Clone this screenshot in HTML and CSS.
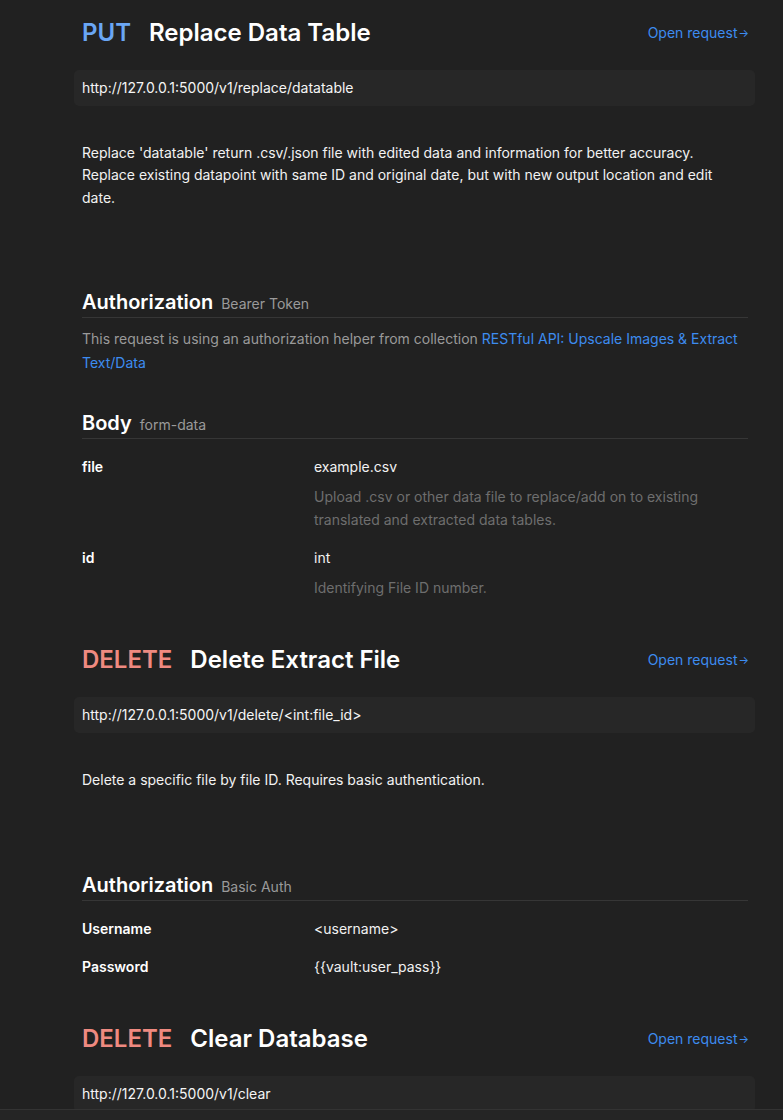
FILE: index.html
```html
<!DOCTYPE html>
<html>
<head>
<meta charset="utf-8">
<link rel="stylesheet" href="styles.css">
</head>
<body>
<main class="doc">
  <section class="req req-long">
    <div class="req-head">
      <h2 class="req-title"><span class="method put">PUT</span><span class="name">Replace Data Table</span></h2>
      <a class="open" href="#">Open request<span class="arrow">→</span></a>
    </div>
    <div class="url">http://127.0.0.1:5000/v1/replace/datatable</div>
    <p class="desc">Replace 'datatable' return .csv/.json file with edited data and information for better accuracy. Replace existing datapoint with same ID and original date, but with new output location and edit date.</p>

    <div class="sub first">
      <h3 class="sub-head">Authorization<span class="sub-type">Bearer Token</span></h3>
      <p class="helper">This request is using an authorization helper from collection <a href="#">RESTful API: Upscale Images &amp; Extract Text/Data</a></p>
    </div>

    <div class="sub">
      <h3 class="sub-head">Body<span class="sub-type">form-data</span></h3>
      <div class="kv body-kv">
        <div class="row">
          <div class="key">file</div>
          <div class="val">example.csv<div class="note">Upload .csv or other data file to replace/add on to existing translated and extracted data tables.</div></div>
        </div>
        <div class="row">
          <div class="key">id</div>
          <div class="val">int<div class="note">Identifying File ID number.</div></div>
        </div>
      </div>
    </div>
  </section>

  <section class="req">
    <div class="req-head">
      <h2 class="req-title"><span class="method del">DELETE</span><span class="name">Delete Extract File</span></h2>
      <a class="open" href="#">Open request<span class="arrow">→</span></a>
    </div>
    <div class="url">http://127.0.0.1:5000/v1/delete/&lt;int:file_id&gt;</div>
    <p class="desc">Delete a specific file by file ID. Requires basic authentication.</p>

    <div class="sub first">
      <h3 class="sub-head">Authorization<span class="sub-type">Basic Auth</span></h3>
      <div class="kv auth">
        <div class="row">
          <div class="key">Username</div>
          <div class="val">&lt;username&gt;</div>
        </div>
        <div class="row">
          <div class="key">Password</div>
          <div class="val">{{vault:user_pass}}</div>
        </div>
      </div>
    </div>
  </section>

  <section class="req">
    <div class="req-head">
      <h2 class="req-title"><span class="method del">DELETE</span><span class="name">Clear Database</span></h2>
      <a class="open" href="#">Open request<span class="arrow">→</span></a>
    </div>
    <div class="url">http://127.0.0.1:5000/v1/clear</div>
  </section>
</main>
<footer class="bottom-bar"></footer>
</body>
</html>
```
FILE: styles.css
```css
html, body {
  margin: 0;
  padding: 0;
  background: #212121;
}
body {
  font-family: Inter, "Noto Sans", "Liberation Sans", sans-serif;
  color: #f2f2f2;
  font-size: 14px;
  -webkit-font-smoothing: antialiased;
}
.doc {
  width: 666px;
  margin-left: 82px;
  padding-top: 17px;
  padding-bottom: 40px;
}
.req {
  margin-bottom: 44px;
}
.req.req-long {
  margin-bottom: 45px;
}
.req-head {
  display: flex;
  align-items: center;
  justify-content: space-between;
  height: 32px;
  margin-bottom: 21px;
}
.req-title {
  margin: 0;
  font-size: 24px;
  line-height: 32px;
  font-weight: 600;
  display: flex;
  gap: 18px;
}
.method { font-weight: 600; }
.method.put { color: #6aa6f4; }
.method.del { color: #ef8a80; }
.name { color: #ffffff; }
.open {
  color: #3d8cf0;
  text-decoration: none;
  font-size: 14px;
  line-height: 20px;
  display: flex;
  align-items: center;
  margin-right: -1px;
}
.arrow {
  font-size: 11px;
  margin-left: 1px;
}
.url {
  margin: 0 -7px 0 -8px;
  padding: 0 8px;
  height: 36px;
  line-height: 36px;
  background: #272727;
  border-radius: 5px;
  font-size: 14px;
  color: #f5f5f5;
}
.desc {
  margin: 36px 0 0;
  font-size: 14px;
  line-height: 22.4px;
  color: #f2f2f2;
}
.sub {
  margin-top: 35px;
}
.sub.first {
  margin-top: 80px;
}
.sub-head {
  margin: 0;
  font-size: 20px;
  line-height: 26px;
  font-weight: 600;
  color: #ffffff;
  border-bottom: 1px solid #363636;
  padding-bottom: 0;
  display: flex;
  align-items: baseline;
  gap: 8px;
}
.sub-type {
  font-size: 14px;
  font-weight: 400;
  color: #9a9a9a;
}
.helper {
  margin: 9px 0 0;
  line-height: 24px;
  color: #9a9a9a;
}
.helper a {
  color: #3d8cf0;
  text-decoration: none;
}
.kv {
  margin-top: 16px;
  display: flex;
  flex-direction: column;
  gap: 14px;
}
.kv.body-kv {
  gap: 15px;
}
.row {
  display: grid;
  grid-template-columns: 232px 1fr;
  line-height: 24px;
}
.key {
  font-weight: 600;
  color: #ffffff;
}
.val {
  color: #f2f2f2;
  font-weight: 400;
}
.note {
  margin-top: 6px;
  line-height: 23px;
  color: #6e6e6e;
  font-weight: 400;
  padding-right: 40px;
}
.bottom-bar {
  position: fixed;
  left: 0;
  right: 0;
  bottom: 0;
  height: 10px;
  background: #252525;
  border-top: 1px solid #333333;
}
```
